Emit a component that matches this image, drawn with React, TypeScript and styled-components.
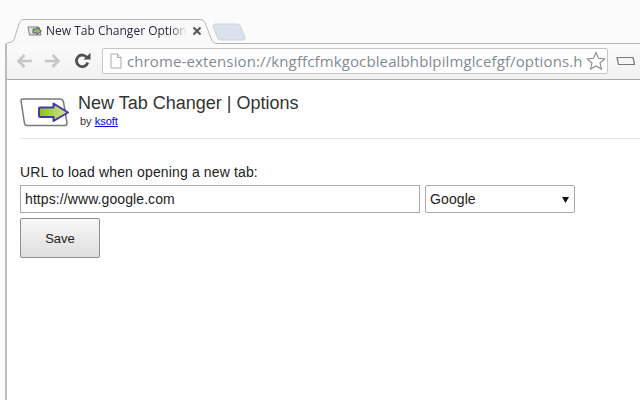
import React from "react";
import styled, { createGlobalStyle } from "styled-components";

const Global = createGlobalStyle`
  html, body { margin: 0; padding: 0; width: 640px; height: 400px; overflow: hidden; background: #fff; }
  #root { width: 640px; height: 400px; }
`;

const Window = styled.div`
  width: 640px;
  height: 400px;
  display: flex;
  flex-direction: column;
  background: #fbfbfb;
  overflow: hidden;
`;

const TabStrip = styled.div`
  position: relative;
  height: 44px;
  flex: none;
  box-sizing: border-box;
  padding: 19px 0 0 27px;
  display: flex;
`;

const TabShape = styled.svg`
  position: absolute;
  left: 0;
  top: 0;
`;

const TabContent = styled.div`
  position: relative;
  display: flex;
  align-items: center;
  height: 24px;
  width: 180px;
`;

const TabTitle = styled.span`
  margin-left: 3px;
  width: 141px;
  font: 12px/16px "Open Sans", "Noto Sans", sans-serif;
  color: #2a2a38;
  white-space: nowrap;
  overflow: hidden;
  -webkit-mask-image: linear-gradient(to right, #000 88%, transparent 100%);
  mask-image: linear-gradient(to right, #000 88%, transparent 100%);
`;

const CloseIcon = styled.svg`
  flex: none;
  margin-left: 5px;
`;

const Toolbar = styled.div`
  position: relative;
  height: 36px;
  flex: none;
  box-sizing: border-box;
  margin-left: 5px;
  border-left: 2px solid #bcbcbc;
  border-bottom: 1px solid #a9a9a9;
  background: linear-gradient(#fbfbfb, #f1f1f1);
  display: flex;
  align-items: center;
  padding: 0 0 2px 9px;
`;

const NavIcon = styled.svg<{ $offset?: number }>`
  flex: none;
  display: block;
  margin-left: ${(p) => p.$offset ?? 0}px;
`;

const NavGroup = styled.div`
  display: flex;
  align-items: center;
  gap: 11px;
  width: 86px;
  flex: none;
`;

const Omnibox = styled.div`
  width: 506px;
  height: 26px;
  flex: none;
  box-sizing: border-box;
  border: 1px solid #c6c6c6;
  border-radius: 2px;
  background: #fff;
  display: flex;
  align-items: center;
  padding-left: 7px;
`;

const Url = styled.span`
  margin-left: 5px;
  width: 456px;
  flex: none;
  overflow: hidden;
  white-space: nowrap;
  font: 15px/24px "Open Sans", "Noto Sans", sans-serif;
  letter-spacing: 0.12px;
  color: #848a91;
`;

const Star = styled.svg`
  flex: none;
  margin-left: 3px;
`;

const MenuIcon = styled.svg`
  flex: none;
  margin-left: 8px;
  margin-top: 1px;
`;

const Page = styled.div`
  flex: 1;
  margin-left: 5px;
  border-left: 2px solid #bcbcbc;
  background: #fff;
  padding: 12px 0 0 13px;
  font-family: "Liberation Sans", Arial, sans-serif;
  color: #222;
`;

const Header = styled.header`
  display: flex;
  align-items: flex-start;
  box-sizing: border-box;
  height: 47px;
  border-bottom: 1px solid #e6e6e6;
`;

const Logo = styled.svg`
  flex: none;
  margin: 6px 9px 0 0;
`;

const Title = styled.h1`
  margin: 1px 0 0;
  font-size: 18px;
  line-height: 21px;
  font-weight: 400;
  color: #333;
`;

const Byline = styled.div`
  font-size: 11px;
  line-height: 12px;
  margin: 1px 0 0 2px;
  color: #333;
`;

const Link = styled.a`
  color: #00e;
  text-decoration: underline;
`;

const Label = styled.div`
  font-size: 14px;
  line-height: 16px;
  letter-spacing: 0.14px;
  margin-top: 25px;
  color: #222;
`;

const FormRow = styled.div`
  display: flex;
  gap: 5px;
  margin-top: 5px;
`;

const UrlInput = styled.input`
  width: 400px;
  height: 28px;
  box-sizing: border-box;
  border: 1px solid #a9a9a9;
  padding: 0 4px;
  margin: 0;
  font: 14px "Liberation Sans", Arial, sans-serif;
  letter-spacing: 0.09px;
  color: #222;
  background: #fff;
  outline: none;
  border-radius: 0;
`;

const SelectBox = styled.div`
  width: 150px;
  height: 28px;
  box-sizing: border-box;
  border: 1px solid #a9a9a9;
  border-radius: 2px;
  background: #fff;
  display: flex;
  align-items: center;
  justify-content: space-between;
  padding: 0 5px 0 4px;
  font-size: 14px;
  letter-spacing: 0.1px;
  color: #222;
`;

const Caret = styled.svg`
  flex: none;
`;

const SaveButton = styled.button`
  display: block;
  width: 80px;
  height: 40px;
  margin: 5px 0 0;
  padding: 0;
  box-sizing: border-box;
  border: 1px solid #8f8f8f;
  border-radius: 2px;
  background: linear-gradient(#f8f8f8, #dedede);
  font: 13px "Liberation Sans", Arial, sans-serif;
  color: #222;
`;

const TabFavicon = () => (
  <svg width="16" height="12" viewBox="0 0 16 12">
    <path d="M1 2h11l2 8H2.5z" fill="#e4e4dc" stroke="#7d7d78" strokeWidth="1" />
    <path d="M6 4h4V2.5L14.500 6 10 9.500V8H6z" fill="#9cc42c" stroke="#4a45a8" strokeWidth="0.9" />
  </svg>
);

export default function App() {
  return (
    <Window>
      <Global />
      <TabStrip>
        <TabShape width="640" height="45" viewBox="0 0 640 45">
          <path
            d="M5.500 45 C5.500 43.500 7 43 10 42.500 C13 42 13.500 40.500 14.500 38 L19 24 C20 20.500 21.500 19.500 24 19.500 H200 C203 19.500 204.500 21 205.500 24 L211 38 C212 41 213 43.500 218 43.500 H640 V45 Z"
            fill="#f9f9f9"
          />
          <path
            d="M5.500 46 V45 C5.500 43.500 7 43 10 42.500 C13 42 13.500 40.500 14.500 38 L19 24 C20 20.500 21.500 19.500 24 19.500 H200 C203 19.500 204.500 21 205.500 24 L211 38 C212 41 213 43.500 218 43.500 H640"
            fill="none"
            stroke="#b4b4b4"
            strokeWidth="1"
          />
          <path
            d="M213 26 C213 24.500 214 24 216 24 H237 C239 24 240 25 240.500 26.500 L245 37.500 C245.500 39 244.500 40 243 40 H221 C219 40 218 39.500 217.500 38 Z"
            fill="#dce2ec"
            stroke="#ccd2dc"
            strokeWidth="1"
          />
        </TabShape>
        <TabContent>
          <TabFavicon />
          <TabTitle>New Tab Changer Options</TabTitle>
          <CloseIcon width="10" height="10" viewBox="0 0 10 10">
            <path d="M1.500 1.500l7 7M8.500 1.500l-7 7" stroke="#555" strokeWidth="2" />
          </CloseIcon>
        </TabContent>
      </TabStrip>
      <Toolbar>
        <NavGroup>
          <NavIcon width="17" height="16" viewBox="0 0 17 16">
            <path d="M8.500 2 2.500 8l6 6M3 8H16" fill="none" stroke="#c6c6c6" strokeWidth="2.600" />
          </NavIcon>
          <NavIcon width="17" height="16" viewBox="0 0 17 16">
            <path d="M8.500 2l6 6-6 6M14 8H1" fill="none" stroke="#c6c6c6" strokeWidth="2.600" />
          </NavIcon>
          <NavIcon $offset={2} width="17" height="17" viewBox="0 0 17 17">
            <path d="M13 5.500A5.800 5.800 0 1 0 13.800 10.500" fill="none" stroke="#505050" strokeWidth="2.800" />
            <path d="M9.500 7.500H16.500V.8z" fill="#505050" />
          </NavIcon>
        </NavGroup>
        <Omnibox>
          <svg width="12" height="16" viewBox="0 0 12 16">
            <path d="M1 1h6.500L11 4.500V15H1z" fill="#fff" stroke="#a8a8a8" />
            <path d="M7.500 1v3.500H11" fill="#eee" stroke="#a8a8a8" />
          </svg>
          <Url>chrome-extension://kngffcfmkgocblealbhblpilmglcefgf/options.html</Url>
          <Star width="20" height="20" viewBox="0 0 20 20">
            <path d="M10 1.500l2.500 5.800 6.200.6-4.700 4.100 1.400 6.100L10 15l-5.400 3.100L6 12 1.300 7.900l6.200-.6z" fill="#fff" stroke="#8c8c8c" strokeWidth="1.100" />
          </Star>
        </Omnibox>
        <MenuIcon width="20" height="10" viewBox="0 0 20 10">
          <path d="M1 1.500h16l1.500 7H2.500z" fill="none" stroke="#777" strokeWidth="1.200" strokeLinejoin="round" />
        </MenuIcon>
      </Toolbar>
      <Page>
        <Header>
          <Logo width="49" height="29" viewBox="0 0 49 29">
            <defs>
              <linearGradient id="logoArrow" x1="0" x2="1" y1="0" y2="0">
                <stop offset="0" stopColor="#8cc01c" />
                <stop offset="1" stopColor="#d5e59a" />
              </linearGradient>
            </defs>
            <path d="M1 2.500 C1 1.500 1.500 1 3 1 H40 C42 1 43 2 43.500 4 L47 25 C47 27 46.500 27.500 45 27.500 H7 C5.500 27.500 5 27 4.500 25.500 Z" fill="#fff" stroke="#7a7a7a" strokeWidth="1.500" />
            <path d="M20 9.500 H33.500 V5.500 L48 14.500 L33.500 23 V19 H20 Q19 19 19 18 V10.500 Q19 9.500 20 9.500 Z" fill="url(#logoArrow)" stroke="#3f3aa8" strokeWidth="2" strokeLinejoin="round" />
          </Logo>
          <div>
            <Title>New Tab Changer | Options</Title>
            <Byline>
              by <Link href="#">ksoft</Link>
            </Byline>
          </div>
        </Header>
        <Label>URL to load when opening a new tab:</Label>
        <FormRow>
          <UrlInput defaultValue="https://www.google.com" />
          <SelectBox>
            <span>Google</span>
            <Caret width="7" height="7" viewBox="0 0 7 7">
              <path d="M0 1h7L3.500 7z" fill="#111" />
            </Caret>
          </SelectBox>
        </FormRow>
        <SaveButton>Save</SaveButton>
      </Page>
    </Window>
  );
}
